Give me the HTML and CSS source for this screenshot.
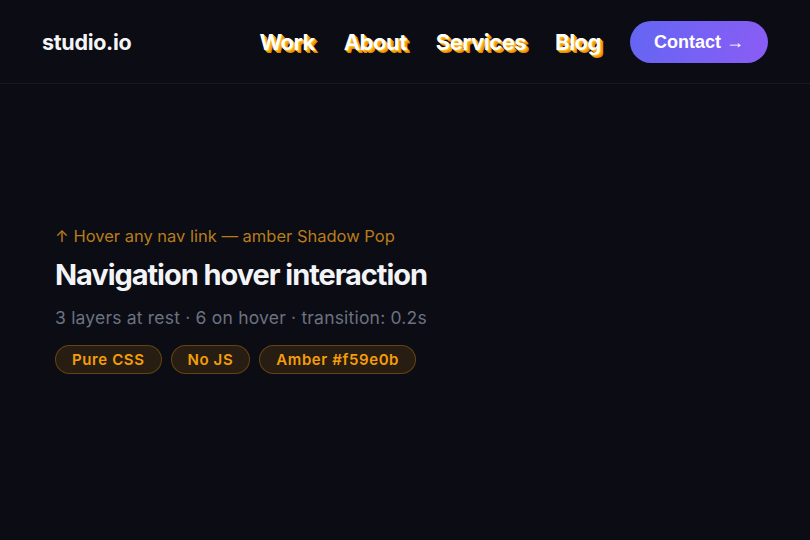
FILE: index.html
```html
<!DOCTYPE html>
<html lang="en">
<head>
<meta charset="utf-8">
<title>studio.io</title>
<link rel="stylesheet" href="styles.css">
</head>
<body>
<header class="header">
  <div class="logo">studio.io</div>
  <nav class="nav">
    <a class="nav-link" href="#">Work</a>
    <a class="nav-link" href="#">About</a>
    <a class="nav-link" href="#">Services</a>
    <a class="nav-link" href="#">Blog</a>
    <a class="cta" href="#">Contact →</a>
  </nav>
</header>
<main class="main">
  <p class="hint">↑ Hover any nav link — amber Shadow Pop</p>
  <h1 class="title">Navigation hover interaction</h1>
  <p class="sub">3 layers at rest · 6 on hover · transition: 0.2s</p>
  <div class="tags">
    <span class="tag">Pure CSS</span>
    <span class="tag">No JS</span>
    <span class="tag">Amber #f59e0b</span>
  </div>
</main>
</body>
</html>
```
FILE: styles.css
```css
* { box-sizing: border-box; }
html, body {
  margin: 0;
  padding: 0;
  background: #0b0c14;
  font-family: Inter, "Liberation Sans", Arial, sans-serif;
  color: #fff;
  height: 100%;
}
.header {
  height: 84px;
  display: flex;
  align-items: center;
  justify-content: space-between;
  padding: 0 42px 0 42px;
  border-bottom: 1px solid rgba(255,255,255,0.06);
}
.logo {
  font-size: 21.5px;
  font-weight: 700;
  letter-spacing: -0.3px;
  color: #f5f5f7;
}
.nav {
  display: flex;
  align-items: center;
  gap: 29px;
}
.nav-link {
  color: #fff;
  text-decoration: none;
  font-size: 22px;
  font-weight: 700;
  letter-spacing: -0.5px;
  text-shadow: 1px 1px 0 #fbbf24, 2px 2px 0 #f59e0b, 3px 3px 0 #e08a09;
}
.nav-link:last-of-type { margin-right: -1px; }
.cta {
  display: inline-flex;
  align-items: center;
  height: 42px;
  padding: 1px 24px 0 24px;
  border-radius: 21px;
  background: linear-gradient(110deg, #6366f1, #8b5cf6);
  color: #fff;
  text-decoration: none;
  font-family: "Liberation Sans", Arial, sans-serif;
  font-size: 18px;
  font-weight: 700;
}
.main {
  padding: 142px 55px 0 55px;
}
.hint {
  margin: 0;
  font-size: 16.5px;
  color: #b97c1a;
  line-height: 20px;
}
.title {
  margin: 11px 0 0 0;
  font-size: 29px;
  font-weight: 700;
  letter-spacing: -1.05px;
  color: #f3f4f8;
  line-height: 36px;
}
.sub {
  margin: 14px 0 0 0;
  font-size: 17.5px;
  letter-spacing: 0.2px;
  line-height: 22px;
  color: #6b7280;
}
.tags {
  margin-top: 16px;
  display: flex;
  gap: 9px;
}
.tag {
  display: inline-flex;
  align-items: center;
  height: 29px;
  padding: 0 16px;
  border-radius: 15px;
  background: rgba(245,158,11,0.12);
  border: 1px solid rgba(245,158,11,0.3);
  color: #f59e0b;
  font-size: 15px;
  font-weight: 600;
  letter-spacing: 0.6px;
}
```
